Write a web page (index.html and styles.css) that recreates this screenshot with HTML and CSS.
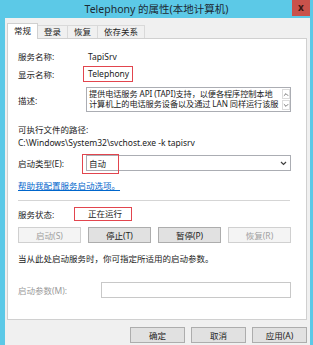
FILE: index.html
```html
<!DOCTYPE html>
<html lang="zh-cn">
<head>
    <meta charset="UTF-8">
    <title>Telephony 的属性(本地计算机)</title>
    <link rel="stylesheet" href="styles.css">
</head>
<body>

<div class="window">
    <div class="titlebar">
        <span></span>
        <span class="title">Telephony 的属性(本地计算机)</span>
        <span class="close">x</span>
    </div>

    <div class="frame">
        <div class="tabs">
            <div class="tab active">常规</div>
            <div class="tab">登录</div>
            <div class="tab">恢复</div>
            <div class="tab">依存关系</div>
        </div>

        <div class="panel">
            <div class="row r-name">
                <span class="label">服务名称:</span>
                <span class="value">TapiSrv</span>
            </div>
            <div class="row r-display">
                <span class="label">显示名称:</span>
                <span class="value"><span class="mark mark-display">Telephony</span></span>
            </div>
            <div class="row r-desc">
                <span class="label">描述:</span>
                <div class="textarea">
                    <div class="textarea-text">
                        <div>提供电话服务 API (TAPI)支持，以便各程序控制本地</div>
                        <div>计算机上的电话服务设备以及通过 LAN 同样运行该服</div>
                    </div>
                    <div class="scrollbar">
                        <span class="arrow"><svg width="7" height="5" viewBox="0 0 7 5"><path d="M1 4 L3.5 1.5 L6 4" fill="none" stroke="#606060" stroke-width="1"/></svg></span>
                        <span class="arrow"><svg width="7" height="5" viewBox="0 0 7 5"><path d="M1 1 L3.5 3.5 L6 1" fill="none" stroke="#606060" stroke-width="1"/></svg></span>
                    </div>
                </div>
            </div>
            <div class="row r-pathlabel">可执行文件的路径:</div>
            <div class="row r-path">C:\Windows\System32\svchost.exe -k tapisrv</div>
            <div class="row r-start">
                <span class="label">启动类型(E):</span>
                <div class="select">
                    <span>自动</span>
                    <svg width="7" height="5" viewBox="0 0 7 5"><path d="M1 1 L3.5 3.5 L6 1" fill="none" stroke="#404040" stroke-width="1.2"/></svg>
                    <span class="mark mark-start"></span>
                </div>
            </div>
            <div class="row r-link"><a href="#">帮助我配置服务启动选项。</a></div>
            <div class="divider"></div>
            <div class="row r-status">
                <span class="label">服务状态:</span>
                <span class="value"><span class="mark mark-status">正在运行</span></span>
            </div>
            <div class="actions">
                <button class="btn" disabled>启动(S)</button>
                <button class="btn">停止(T)</button>
                <button class="btn">暂停(P)</button>
                <button class="btn" disabled>恢复(R)</button>
            </div>
            <div class="row r-note">当从此处启动服务时，你可指定所适用的启动参数。</div>
            <div class="row r-params">
                <span class="label disabled">启动参数(M):</span>
                <div class="input"></div>
            </div>
        </div>

        <div class="footer">
            <button class="btn">确定</button>
            <button class="btn">取消</button>
            <button class="btn">应用(A)</button>
        </div>
    </div>
</div>

</body>
</html>
```

FILE: styles.css
```css
* {
    box-sizing: border-box;
}
body {
    margin: 0;
    font-family: "Noto Sans", "Noto Sans CJK SC", sans-serif;
    font-size: 8.5px;
    color: #222;
}
.window {
    width: 313px;
    height: 345px;
    background-color: #5cc9e7;
    overflow: hidden;
}
.titlebar {
    height: 18px;
    display: grid;
    grid-template-columns: 1fr auto 1fr;
    align-items: start;
}
.title {
    font-size: 10.5px;
    line-height: 18px;
    color: #1c2a33;
}
.close {
    justify-self: end;
    width: 18px;
    height: 16px;
    margin-right: 3px;
    background-color: #c9524b;
    color: #3a1612;
    font-weight: bold;
    font-size: 10px;
    line-height: 14px;
    text-align: center;
}
.frame {
    height: 327px;
    margin: 0 3px 0 5px;
    padding: 5px 3px 0 2px;
    background-color: #f0f0f0;
}
.tabs {
    display: flex;
    align-items: flex-end;
    height: 15px;
}
.tab {
    height: 13px;
    padding: 0 6px;
    line-height: 12px;
    border: 1px solid #d9d9d9;
    border-bottom: none;
    background-color: #f0f0f0;
    margin-left: -1px;
}
.tab.active {
    height: 16px;
    margin-left: 0;
    margin-bottom: -1px;
    background-color: #fff;
    border-color: #d0d0d0;
    position: relative;
    z-index: 1;
    line-height: 14px;
}
.panel {
    height: 282px;
    background-color: #fff;
    border: 1px solid #d0d0d0;
    padding: 10px 15px 0 10px;
}
.row {
    display: flex;
    align-items: center;
    white-space: nowrap;
}
.label {
    width: 68px;
    flex-shrink: 0;
}
.label.disabled {
    color: #9a9a9a;
}
.value {
    padding-left: 2px;
}
.mark {
    border: 1px solid #e2454e;
}
.r-name {
    height: 14px;
}
.r-display {
    height: 16px;
    margin-top: 3px;
}
.mark-display {
    display: inline-block;
    height: 16px;
    line-height: 14px;
    margin-left: -5px;
    padding: 0 4px;
    width: 50px;
}
.r-desc {
    height: 25px;
    margin-top: 5px;
}
.textarea {
    flex: 1;
    height: 25px;
    border: 1px solid #abadb3;
    display: flex;
    min-width: 0;
}
.textarea-text {
    flex: 1;
    min-width: 0;
    font-size: 8.2px;
    letter-spacing: -0.1px;
    line-height: 10px;
    padding: 1px 0 0 2px;
    overflow: hidden;
}
.scrollbar {
    width: 9px;
    display: flex;
    flex-direction: column;
    justify-content: space-between;
    align-items: center;
    padding: 1px 0;
}
.arrow {
    width: 8px;
    height: 10px;
    border: 1px solid #dcdcdc;
    display: flex;
    align-items: center;
    justify-content: center;
}
.r-pathlabel {
    height: 14px;
    margin-top: 10px;
}
.r-path {
    height: 13px;
}
.r-start {
    height: 16px;
    margin-top: 6px;
}
.select {
    flex: 1;
    height: 16px;
    border: 1px solid #abadb3;
    display: flex;
    align-items: center;
    justify-content: space-between;
    padding: 0 3px 0 2px;
    position: relative;
}
.mark-start {
    position: absolute;
    left: -5px;
    top: -2px;
    width: 37px;
    height: 20px;
}
.r-link {
    height: 14px;
    margin-top: 7px;
}
.r-link a {
    color: #0066cc;
}
.divider {
    height: 1px;
    margin: 8px 1px 0 0;
    background-color: #d5d5d5;
}
.r-status {
    height: 14px;
    margin-top: 6px;
}
.mark-status {
    display: inline-block;
    height: 14px;
    line-height: 12px;
    margin-left: -14px;
    padding: 0 9px 0 13px;
}
.actions {
    display: grid;
    grid-template-columns: repeat(4, 1fr);
    gap: 7px;
    margin-top: 6px;
}
.btn {
    height: 16px;
    padding: 0;
    font-family: inherit;
    font-size: 8.5px;
    color: #222;
    background-color: #e1e1e1;
    border: 1px solid #adadad;
}
.btn:disabled {
    color: #a0a0a0;
    background-color: #f4f4f4;
    border-color: #d0d0d0;
}
.r-note {
    height: 14px;
    margin-top: 8px;
}
.r-params {
    height: 16px;
    margin-top: 17px;
}
.r-params .label {
    width: 83px;
}
.input {
    flex: 1;
    height: 16px;
    border: 1px solid #c8c8c8;
}
.footer {
    display: flex;
    justify-content: flex-end;
    gap: 6px;
    margin-top: 7px;
}
.footer .btn {
    width: 55px;
}
```
